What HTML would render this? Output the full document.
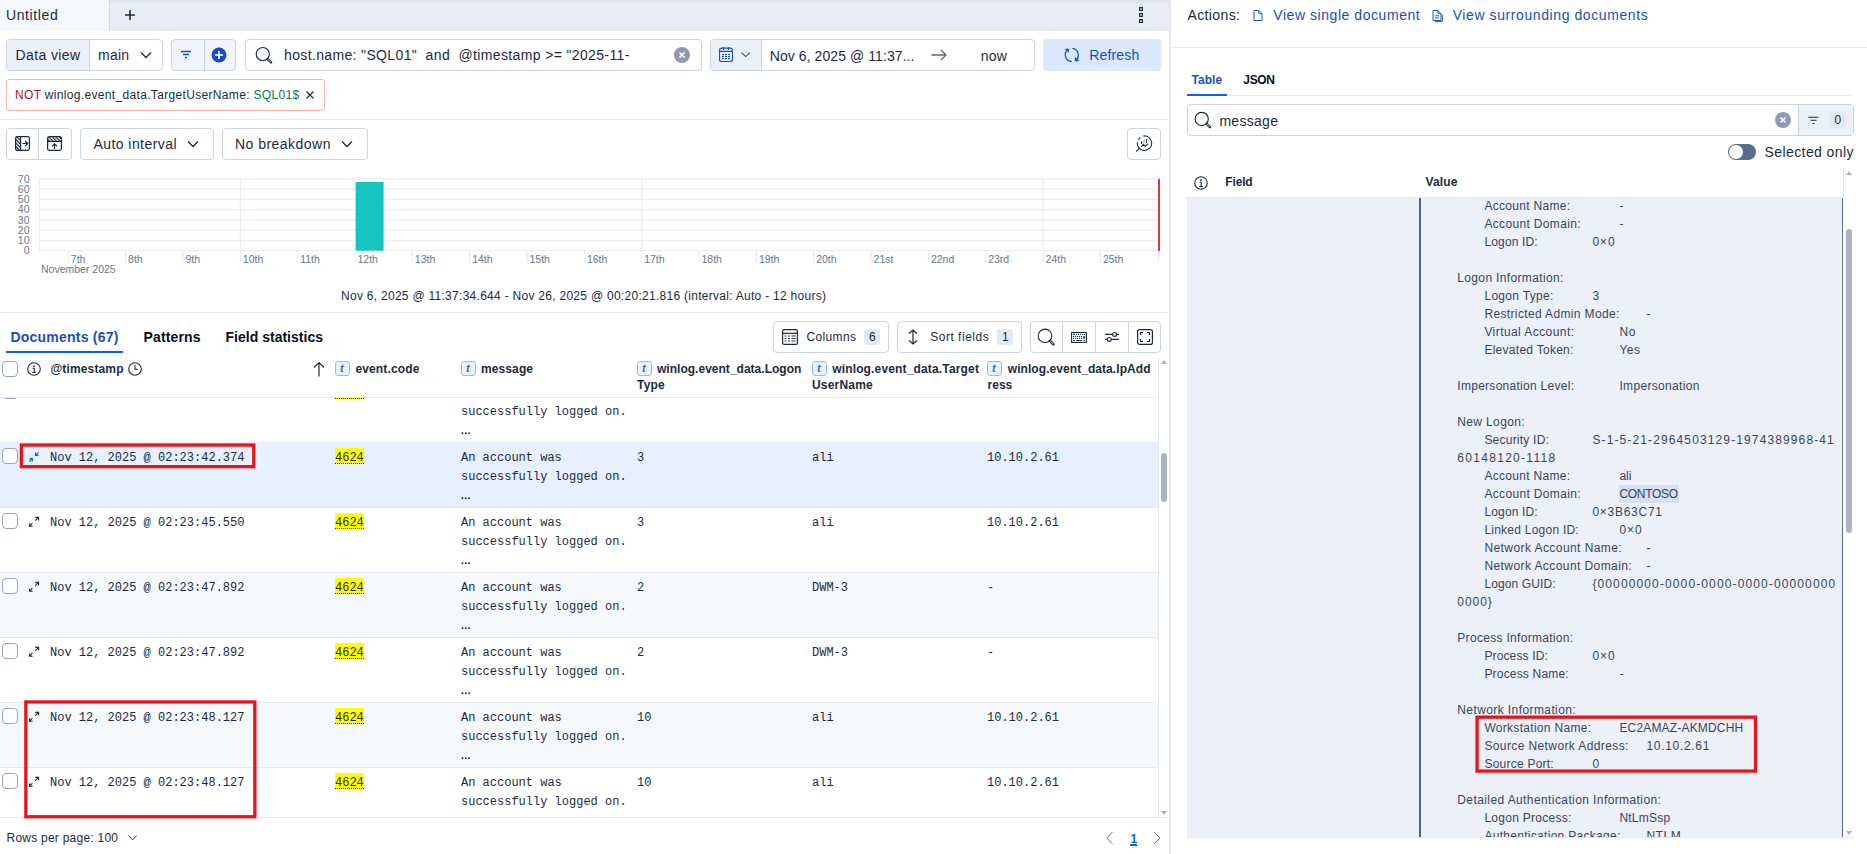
<!DOCTYPE html>
<html><head><meta charset="utf-8">
<style>
*{box-sizing:border-box;margin:0;padding:0}
html,body{width:1867px;height:854px;overflow:hidden;background:#fff}
body{font-family:"Liberation Sans",sans-serif;color:#1d2a3e;font-size:14px;position:relative}
.a{position:absolute}
.t{position:absolute;white-space:nowrap;line-height:1}
.box{position:absolute;border:1px solid #cad3e2;border-radius:4px;background:#fff}
svg{position:absolute;overflow:visible}
</style></head><body>
<div class="a" style="left:0px;top:0px;width:1169px;height:31px;background:#e8ecf3;"></div>
<div class="a" style="left:0px;top:0px;width:1169px;height:4px;background:linear-gradient(#dce1e9,#e8ecf3);"></div>
<div class="a" style="left:0px;top:0px;width:110px;height:31px;background:#f5f8fb;border-right:1px solid #d3dae6"></div>
<div class="t" style="left:6px;top:8.00px;font-size:14px;letter-spacing:0.604px;">Untitled</div>
<svg style="left:124px;top:9px" width="12" height="12" viewBox="0 0 12 12"><path d="M6 1v10M1 6h10" stroke="#1d2a3e" stroke-width="1.6"/></svg>
<svg style="left:1137px;top:7px" width="8" height="16" viewBox="0 0 8 16"><rect x="2.6" y="0.6" width="2.8" height="2.8" fill="none" stroke="#1d2a3e" stroke-width="1.2"/><rect x="2.6" y="6.6" width="2.8" height="2.8" fill="none" stroke="#1d2a3e" stroke-width="1.2"/><rect x="2.6" y="12.6" width="2.8" height="2.8" fill="none" stroke="#1d2a3e" stroke-width="1.2"/></svg>
<div class="a" style="left:1169px;top:0px;width:2px;height:854px;background:#e3e8f2;"></div>
<div class="box" style="left:6px;top:39px;width:157px;height:32px;overflow:hidden"><div class="a" style="left:0;top:0;width:83px;height:30px;background:#ecf0f8;border-right:1px solid #cad3e2"></div></div>
<div class="t" style="left:15.5px;top:48.00px;font-size:14px;letter-spacing:0.391px;">Data view</div>
<div class="t" style="left:98px;top:48.00px;font-size:14px;letter-spacing:0.214px;">main</div>
<svg style="left:140px;top:51px" width="12" height="8" viewBox="0 0 12 8"><path d="M1 1.5l5 5 5-5" fill="none" stroke="#1d2a3e" stroke-width="1.3"/></svg>
<div class="box" style="left:171px;top:39px;width:65px;height:32px;background:#f1f4fa;overflow:hidden"><div class="a" style="left:32px;top:0;width:1px;height:30px;background:#cad3e2"></div></div>
<svg style="left:180px;top:50px" width="12" height="10" viewBox="0 0 12 10"><path d="M1 1.5h10M3 4.5h6M5 7.5h2" stroke="#1750ba" stroke-width="1.3"/></svg>
<svg style="left:211px;top:47px" width="16" height="16" viewBox="0 0 16 16"><circle cx="8" cy="8" r="7.5" fill="#1750ba"/><path d="M8 4v8M4 8h8" stroke="#fff" stroke-width="1.6"/></svg>
<div class="box" style="left:245px;top:39px;width:457px;height:32px;"></div>
<svg style="left:255px;top:46px" width="20" height="20" viewBox="0 0 20 20"><circle cx="7.8" cy="8.1" r="6.6" fill="none" stroke="#1d2a3e" stroke-width="1.15"/><path d="M12.77 13.07L16.07 16.37" stroke="#1d2a3e" stroke-width="2.6" stroke-linecap="round"/><path d="M13.17 13.47L15.77 16.07" stroke="#fff" stroke-width="0.7" stroke-linecap="round"/></svg>
<div class="t" style="left:284px;top:48.40px;font-size:14px;letter-spacing:0.358px;">host.name: "SQL01"  and  @timestamp &gt;= "2025-11-</div>
<svg style="left:674px;top:47px" width="16" height="16" viewBox="0 0 16 16"><circle cx="8" cy="8" r="8" fill="#8e9ab1"/><path d="M5.5 5.5l5 5M10.5 5.5l-5 5" stroke="#fff" stroke-width="1.7"/></svg>
<div class="box" style="left:710px;top:39px;width:325px;height:32px;overflow:hidden"><div class="a" style="left:0;top:0;width:51px;height:30px;background:#ecf0f8;border-right:1px solid #cad3e2"></div></div>
<svg style="left:719px;top:47px" width="14" height="15" viewBox="0 0 14 15"><rect x="0.55" y="1.1" width="12.9" height="13.4" rx="2" fill="none" stroke="#1750ba" stroke-width="1.1"/><path d="M0.55 4.4h12.9M4.5 0v3M9.5 0v3" stroke="#1750ba" stroke-width="1.1"/><rect x="3" y="6.95" width="2" height="1.1" fill="#1750ba"/><rect x="3" y="8.95" width="2" height="1.1" fill="#1750ba"/><rect x="3" y="10.95" width="2" height="1.1" fill="#1750ba"/><rect x="6" y="6.95" width="2" height="1.1" fill="#1750ba"/><rect x="6" y="8.95" width="2" height="1.1" fill="#1750ba"/><rect x="6" y="10.95" width="2" height="1.1" fill="#1750ba"/><rect x="9" y="6.95" width="2" height="1.1" fill="#1750ba"/><rect x="9" y="8.95" width="2" height="1.1" fill="#1750ba"/><rect x="9" y="10.95" width="2" height="1.1" fill="#1750ba"/></svg>
<svg style="left:741px;top:52px" width="10" height="6" viewBox="0 0 10 6"><path d="M0.5 0.6L4.7 4.6 8.9 0.6" fill="none" stroke="#1750ba" stroke-width="1.1"/></svg>
<div class="t" style="left:769.7px;top:48.60px;font-size:14px;letter-spacing:0.078px;">Nov 6, 2025 @ 11:37...</div>
<svg style="left:931px;top:49px" width="16" height="12" viewBox="0 0 16 12"><path d="M0.5 6h14.5M10 1l5 5-5 5" fill="none" stroke="#5a6880" stroke-width="1.3"/></svg>
<div class="t" style="left:980.8px;top:48.60px;font-size:14px;letter-spacing:0.156px;">now</div>
<div class="a" style="left:1043px;top:39px;width:118px;height:32px;background:#d9e8ff;border-radius:4px"></div>
<svg style="left:1064px;top:47px" width="16" height="16" viewBox="0 0 16 16"><path d="M7.7 14.6A6.7 6.7 0 0 1 4.3 2.3M1.2 2.3H4.3V5.6M8.4 1.4A6.7 6.7 0 0 1 11.5 13.5M11.5 10.2V13.5H14.8" fill="none" stroke="#1750ba" stroke-width="1.3"/></svg>
<div class="t" style="left:1089.2px;top:48.00px;font-size:14px;color:#1750ba;letter-spacing:0.161px;">Refresh</div>
<div class="a" style="left:6px;top:79px;width:319px;height:32px;border:1px solid #f6b3ad;border-radius:3px"></div>
<div class="t" style="left:15px;top:89.00px;font-size:12px;letter-spacing:0.332px;"><span style="color:#a71627">NOT</span> winlog.event_data.TargetUserName: <span style="color:#00785a">SQL01$</span></div>
<svg style="left:306px;top:91px" width="8" height="8" viewBox="0 0 8 8"><path d="M0.5 0.5l7 7M7.5 0.5l-7 7" stroke="#1d2a3e" stroke-width="1.2"/></svg>
<div class="a" style="left:0px;top:119px;width:1169px;height:1px;background:#e3e8f2;"></div>
<div class="box" style="left:6px;top:128px;width:66px;height:32px"><div class="a" style="left:31px;top:0;width:1px;height:30px;background:#cad3e2"></div></div>
<svg style="left:15px;top:136px" width="15" height="15" viewBox="0 0 15 15"><defs><pattern id="hp" width="2.5" height="2.5" patternUnits="userSpaceOnUse" patternTransform="rotate(-45)"><rect width="1.2" height="2.5" fill="#1d2a3e"/></pattern></defs><rect x="0.6" y="0.6" width="13.8" height="13.8" rx="1.8" fill="none" stroke="#1d2a3e" stroke-width="1.2"/><rect x="0.6" y="0.6" width="5" height="13.8" fill="url(#hp)"/><path d="M5.6 0.6v13.8" stroke="#1d2a3e" stroke-width="1.2"/><path d="M7.5 7.5h5M10.2 5l2.5 2.5-2.5 2.5" fill="none" stroke="#1d2a3e" stroke-width="1.2"/></svg>
<svg style="left:47px;top:136px" width="15" height="15" viewBox="0 0 15 15"><rect x="0.6" y="0.6" width="13.8" height="13.8" rx="1.8" fill="none" stroke="#1d2a3e" stroke-width="1.2"/><rect x="0.6" y="0.6" width="13.8" height="4.8" fill="url(#hp)"/><path d="M0.6 5.4h13.8" stroke="#1d2a3e" stroke-width="1.2"/><path d="M7.5 13V7.8M5 10.3l2.5-2.5 2.5 2.5" fill="none" stroke="#1d2a3e" stroke-width="1.2"/></svg>
<div class="box" style="left:80px;top:128px;width:134px;height:32px;"></div>
<div class="t" style="left:93.5px;top:137.00px;font-size:14px;letter-spacing:0.431px;">Auto interval</div>
<svg style="left:187px;top:140px" width="12" height="8" viewBox="0 0 12 8"><path d="M1 1.5l5 5 5-5" fill="none" stroke="#1d2a3e" stroke-width="1.3"/></svg>
<div class="box" style="left:222px;top:128px;width:146px;height:32px;"></div>
<div class="t" style="left:235px;top:137.00px;font-size:14px;letter-spacing:0.474px;">No breakdown</div>
<svg style="left:341px;top:140px" width="12" height="8" viewBox="0 0 12 8"><path d="M1 1.5l5 5 5-5" fill="none" stroke="#1d2a3e" stroke-width="1.3"/></svg>
<div class="box" style="left:1127px;top:128px;width:34px;height:32px;"></div>
<svg style="left:1132px;top:132px" width="24" height="24" viewBox="0 0 24 24"><path d="M11.2 3.95A7.3 7.3 0 1 1 5.2 10.3M6.3 7.7L8.3 5.3M7.5 16.3L4.3 19.5M9.6 9.3v2.6M14.5 7v3.7M9.2 14.6L11.5 12.4 13.4 14.4 16.2 11.6" fill="none" stroke="#1d2a3e" stroke-width="1.1"/><path d="M12 8.2v2.5" stroke="#1d2a3e" stroke-width="1" opacity="0.5"/></svg>
<svg style="left:0;top:170px" width="1169" height="110" viewBox="0 170 1169 110">
<path d="M39 179.0H1159" stroke="#eaeef5" stroke-width="1.3"/>
<text x="29.5" y="182.7" text-anchor="end" font-size="10.5" fill="#69778e" font-family="Liberation Sans">70</text>
<path d="M39 189.2H1159" stroke="#eaeef5" stroke-width="1.3"/>
<text x="29.5" y="192.9" text-anchor="end" font-size="10.5" fill="#69778e" font-family="Liberation Sans">60</text>
<path d="M39 199.5H1159" stroke="#eaeef5" stroke-width="1.3"/>
<text x="29.5" y="203.2" text-anchor="end" font-size="10.5" fill="#69778e" font-family="Liberation Sans">50</text>
<path d="M39 209.7H1159" stroke="#eaeef5" stroke-width="1.3"/>
<text x="29.5" y="213.4" text-anchor="end" font-size="10.5" fill="#69778e" font-family="Liberation Sans">40</text>
<path d="M39 220.0H1159" stroke="#eaeef5" stroke-width="1.3"/>
<text x="29.5" y="223.7" text-anchor="end" font-size="10.5" fill="#69778e" font-family="Liberation Sans">30</text>
<path d="M39 230.2H1159" stroke="#eaeef5" stroke-width="1.3"/>
<text x="29.5" y="233.9" text-anchor="end" font-size="10.5" fill="#69778e" font-family="Liberation Sans">20</text>
<path d="M39 240.5H1159" stroke="#eaeef5" stroke-width="1.3"/>
<text x="29.5" y="244.2" text-anchor="end" font-size="10.5" fill="#69778e" font-family="Liberation Sans">10</text>
<path d="M39 250.7H1159" stroke="#eaeef5" stroke-width="1.3"/>
<text x="29.5" y="254.4" text-anchor="end" font-size="10.5" fill="#69778e" font-family="Liberation Sans">0</text>
<path d="M39.5 179V250.7" stroke="#eaeef5" stroke-width="1"/>
<path d="M240.3 179V250.7" stroke="#e3e8f2" stroke-width="1"/>
<path d="M641.7 179V250.7" stroke="#e3e8f2" stroke-width="1"/>
<path d="M1043.1 179V250.7" stroke="#e3e8f2" stroke-width="1"/>
<path d="M68.3 250.7V262.5" stroke="#e3e8f2" stroke-width="1"/>
<text x="70.8" y="262.5" font-size="10.5" fill="#69778e" font-family="Liberation Sans">7th</text>
<path d="M125.6 250.7V262.5" stroke="#e3e8f2" stroke-width="1"/>
<text x="128.1" y="262.5" font-size="10.5" fill="#69778e" font-family="Liberation Sans">8th</text>
<path d="M183.0 250.7V262.5" stroke="#e3e8f2" stroke-width="1"/>
<text x="185.5" y="262.5" font-size="10.5" fill="#69778e" font-family="Liberation Sans">9th</text>
<path d="M240.3 250.7V262.5" stroke="#e3e8f2" stroke-width="1"/>
<text x="242.8" y="262.5" font-size="10.5" fill="#69778e" font-family="Liberation Sans">10th</text>
<path d="M297.7 250.7V262.5" stroke="#e3e8f2" stroke-width="1"/>
<text x="300.2" y="262.5" font-size="10.5" fill="#69778e" font-family="Liberation Sans">11th</text>
<path d="M355.0 250.7V262.5" stroke="#e3e8f2" stroke-width="1"/>
<text x="357.5" y="262.5" font-size="10.5" fill="#69778e" font-family="Liberation Sans">12th</text>
<path d="M412.3 250.7V262.5" stroke="#e3e8f2" stroke-width="1"/>
<text x="414.8" y="262.5" font-size="10.5" fill="#69778e" font-family="Liberation Sans">13th</text>
<path d="M469.7 250.7V262.5" stroke="#e3e8f2" stroke-width="1"/>
<text x="472.2" y="262.5" font-size="10.5" fill="#69778e" font-family="Liberation Sans">14th</text>
<path d="M527.0 250.7V262.5" stroke="#e3e8f2" stroke-width="1"/>
<text x="529.5" y="262.5" font-size="10.5" fill="#69778e" font-family="Liberation Sans">15th</text>
<path d="M584.4 250.7V262.5" stroke="#e3e8f2" stroke-width="1"/>
<text x="586.9" y="262.5" font-size="10.5" fill="#69778e" font-family="Liberation Sans">16th</text>
<path d="M641.7 250.7V262.5" stroke="#e3e8f2" stroke-width="1"/>
<text x="644.2" y="262.5" font-size="10.5" fill="#69778e" font-family="Liberation Sans">17th</text>
<path d="M699.0 250.7V262.5" stroke="#e3e8f2" stroke-width="1"/>
<text x="701.5" y="262.5" font-size="10.5" fill="#69778e" font-family="Liberation Sans">18th</text>
<path d="M756.4 250.7V262.5" stroke="#e3e8f2" stroke-width="1"/>
<text x="758.9" y="262.5" font-size="10.5" fill="#69778e" font-family="Liberation Sans">19th</text>
<path d="M813.7 250.7V262.5" stroke="#e3e8f2" stroke-width="1"/>
<text x="816.2" y="262.5" font-size="10.5" fill="#69778e" font-family="Liberation Sans">20th</text>
<path d="M871.1 250.7V262.5" stroke="#e3e8f2" stroke-width="1"/>
<text x="873.6" y="262.5" font-size="10.5" fill="#69778e" font-family="Liberation Sans">21st</text>
<path d="M928.4 250.7V262.5" stroke="#e3e8f2" stroke-width="1"/>
<text x="930.9" y="262.5" font-size="10.5" fill="#69778e" font-family="Liberation Sans">22nd</text>
<path d="M985.7 250.7V262.5" stroke="#e3e8f2" stroke-width="1"/>
<text x="988.2" y="262.5" font-size="10.5" fill="#69778e" font-family="Liberation Sans">23rd</text>
<path d="M1043.1 250.7V262.5" stroke="#e3e8f2" stroke-width="1"/>
<text x="1045.6" y="262.5" font-size="10.5" fill="#69778e" font-family="Liberation Sans">24th</text>
<path d="M1100.4 250.7V262.5" stroke="#e3e8f2" stroke-width="1"/>
<text x="1102.9" y="262.5" font-size="10.5" fill="#69778e" font-family="Liberation Sans">25th</text>
<path d="M1158.5 250.7V262.5" stroke="#e3e8f2" stroke-width="1"/>
<text x="41" y="272.8" font-size="10.5" fill="#69778e" font-family="Liberation Sans">November 2025</text>
<rect x="355.6" y="182" width="28" height="68.7" fill="#16c5c0"/>
<rect x="1158" y="179" width="2" height="72.0" fill="#da3737"/>
</svg>
<div class="t" style="left:341px;top:290.00px;font-size:12px;letter-spacing:0.280px;">Nov 6, 2025 @ 11:37:34.644 - Nov 26, 2025 @ 00:20:21.816 (interval: Auto - 12 hours)</div>
<div class="a" style="left:0px;top:312px;width:1169px;height:1px;background:#e3e8f2;"></div>
<div class="t" style="left:10.4px;top:329.60px;font-size:14px;font-weight:bold;color:#1750ba;letter-spacing:0.228px;">Documents (67)</div>
<div class="t" style="left:143.6px;top:329.60px;font-size:14px;font-weight:bold;color:#07101f;letter-spacing:0.138px;">Patterns</div>
<div class="t" style="left:225.5px;top:329.60px;font-size:14px;font-weight:bold;color:#07101f;letter-spacing:0.016px;">Field statistics</div>
<div class="a" style="left:6px;top:351px;width:117px;height:2px;background:#0b64dd;"></div>
<div class="box" style="left:773px;top:321px;width:116px;height:32px;"></div>
<svg style="left:782px;top:329px" width="16" height="16" viewBox="0 0 16 16"><rect x="0.6" y="0.6" width="14.8" height="14.8" rx="1.5" fill="none" stroke="#1d2a3e" stroke-width="1.2"/><path d="M0.6 4.3h14.8" stroke="#1d2a3e" stroke-width="1.2"/><path d="M2.5 7h2M6 7h2M9.5 7h4M2.5 9.5h2M6 9.5h2M9.5 9.5h4M2.5 12h2M6 12h2M9.5 12h4" stroke="#1d2a3e" stroke-width="1"/></svg>
<div class="t" style="left:806.5px;top:331.00px;font-size:12px;letter-spacing:0.357px;">Columns</div>
<div class="a" style="left:864px;top:329px;width:16px;height:16px;background:#e3e8f2;border-radius:3px"></div>
<div class="t" style="left:869px;top:331.00px;font-size:12px;letter-spacing:0.000px;">6</div>
<div class="box" style="left:897px;top:321px;width:125px;height:32px;"></div>
<svg style="left:906px;top:329px" width="14" height="16" viewBox="0 0 14 16"><path d="M7 1v14M3 4.5L7 1l4 3.5M3 11.5L7 15l4-3.5" fill="none" stroke="#1d2a3e" stroke-width="1.2"/></svg>
<div class="t" style="left:930.2px;top:331.00px;font-size:12px;letter-spacing:0.514px;">Sort fields</div>
<div class="a" style="left:997px;top:329px;width:16px;height:16px;background:#e3e8f2;border-radius:3px"></div>
<div class="t" style="left:1002px;top:331.00px;font-size:12px;letter-spacing:0.000px;">1</div>
<div class="box" style="left:1030px;top:321px;width:131px;height:32px"><div class="a" style="left:31px;top:0;width:1px;height:30px;background:#cad3e2"></div><div class="a" style="left:64px;top:0;width:1px;height:30px;background:#cad3e2"></div><div class="a" style="left:97px;top:0;width:1px;height:30px;background:#cad3e2"></div></div>
<svg style="left:1037px;top:328px" width="20" height="20" viewBox="0 0 20 20"><circle cx="8" cy="7.9" r="6.8" fill="none" stroke="#1d2a3e" stroke-width="1.15"/><path d="M13.11 13.01L16.41 16.31" stroke="#1d2a3e" stroke-width="2.6" stroke-linecap="round"/><path d="M13.51 13.41L16.11 16.01" stroke="#fff" stroke-width="0.7" stroke-linecap="round"/></svg>
<svg style="left:1071px;top:332px" width="16" height="11" viewBox="0 0 16 11"><rect x="0.6" y="0.5" width="14.8" height="9.9" fill="none" stroke="#1d2a3e" stroke-width="1.1"/><rect x="4.95" y="1.8499999999999999" width="1.1" height="1.1" fill="#1d2a3e"/><rect x="6.95" y="1.8499999999999999" width="1.1" height="1.1" fill="#1d2a3e"/><rect x="8.95" y="1.8499999999999999" width="1.1" height="1.1" fill="#1d2a3e"/><rect x="10.95" y="1.8499999999999999" width="1.1" height="1.1" fill="#1d2a3e"/><rect x="12.95" y="1.8499999999999999" width="1.1" height="1.1" fill="#1d2a3e"/><rect x="1.95" y="3.95" width="1.1" height="1.1" fill="#1d2a3e"/><rect x="3.95" y="3.95" width="1.1" height="1.1" fill="#1d2a3e"/><rect x="5.95" y="3.95" width="1.1" height="1.1" fill="#1d2a3e"/><rect x="7.95" y="3.95" width="1.1" height="1.1" fill="#1d2a3e"/><rect x="9.95" y="3.95" width="1.1" height="1.1" fill="#1d2a3e"/><rect x="1.95" y="5.8500000000000005" width="1.1" height="1.1" fill="#1d2a3e"/><rect x="3.95" y="5.8500000000000005" width="1.1" height="1.1" fill="#1d2a3e"/><rect x="5.95" y="5.8500000000000005" width="1.1" height="1.1" fill="#1d2a3e"/><rect x="7.95" y="5.8500000000000005" width="1.1" height="1.1" fill="#1d2a3e"/><rect x="9.95" y="5.8500000000000005" width="1.1" height="1.1" fill="#1d2a3e"/><path d="M2.1 2.4h1.8M2.1 8.5h1.8M5.3 8.5h5.4M12.3 8.5h1.5" stroke="#1d2a3e" stroke-width="1.1"/><rect x="12.3" y="4" width="1.5" height="2.8" fill="#1d2a3e"/></svg>
<svg style="left:1104px;top:331px" width="16" height="12" viewBox="0 0 16 12"><path d="M1 3.4h14M1 8.4h14" stroke="#1d2a3e" stroke-width="1.2"/><circle cx="10.6" cy="3.4" r="1.9" fill="#fff" stroke="#1d2a3e" stroke-width="1.2"/><circle cx="5.3" cy="8.4" r="1.9" fill="#fff" stroke="#1d2a3e" stroke-width="1.2"/></svg>
<svg style="left:1137px;top:329px" width="16" height="16" viewBox="0 0 16 16"><rect x="0.6" y="0.6" width="14.8" height="14.8" rx="2" fill="none" stroke="#1d2a3e" stroke-width="1.2"/><path d="M3.5 6V3.5H6M10 3.5h2.5V6M12.5 10v2.5H10M6 12.5H3.5V10" fill="none" stroke="#1d2a3e" stroke-width="1.2"/></svg>
<div class="a" style="left:2px;top:361px;width:16px;height:16px;background:#fff;border:1px solid #98a6bd;border-radius:4px"></div>
<svg style="left:27px;top:362px" width="14" height="14" viewBox="0 0 14 14"><circle cx="7" cy="7" r="6.3" fill="none" stroke="#1d2a3e" stroke-width="1.1"/><circle cx="7" cy="4.2" r="0.9" fill="#1d2a3e"/><path d="M5.5 6.3h1.7v4.2M5.3 10.5h3.5" fill="none" stroke="#1d2a3e" stroke-width="1.1"/></svg>
<div class="t" style="left:50.5px;top:362.70px;font-size:12px;font-weight:bold;letter-spacing:0.142px;">@timestamp</div>
<svg style="left:128px;top:362px" width="14" height="14" viewBox="0 0 14 14"><circle cx="7" cy="7" r="6.3" fill="none" stroke="#1d2a3e" stroke-width="1.1"/><path d="M7 3.3V7.3h3" fill="none" stroke="#1d2a3e" stroke-width="1.1"/></svg>
<svg style="left:313px;top:361px" width="12" height="16" viewBox="0 0 12 16"><path d="M6 1.5v14M1 6.5l5-5 5 5" fill="none" stroke="#1d2a3e" stroke-width="1.2"/></svg>
<div class="a" style="left:335px;top:361px;width:15px;height:15px;border:1px solid #94bcf4;background:#e8f1fe;border-radius:3px"></div>
<div class="t" style="left:340px;top:362.50px;font-size:11px;font-weight:bold;color:#3a6cc3;letter-spacing:0.000px;font-style:italic;">t</div>
<div class="t" style="left:355.4px;top:362.70px;font-size:12px;font-weight:bold;letter-spacing:0.144px;">event.code</div>
<div class="a" style="left:461px;top:361px;width:15px;height:15px;border:1px solid #94bcf4;background:#e8f1fe;border-radius:3px"></div>
<div class="t" style="left:466px;top:362.50px;font-size:11px;font-weight:bold;color:#3a6cc3;letter-spacing:0.000px;font-style:italic;">t</div>
<div class="t" style="left:481px;top:362.70px;font-size:12px;font-weight:bold;letter-spacing:0.104px;">message</div>
<div class="a" style="left:637px;top:361px;width:15px;height:15px;border:1px solid #94bcf4;background:#e8f1fe;border-radius:3px"></div>
<div class="t" style="left:642px;top:362.50px;font-size:11px;font-weight:bold;color:#3a6cc3;letter-spacing:0.000px;font-style:italic;">t</div>
<div class="t" style="left:657px;top:362.70px;font-size:12px;font-weight:bold;letter-spacing:0.017px;">winlog.event_data.Logon</div>
<div class="t" style="left:637px;top:378.70px;font-size:12px;font-weight:bold;letter-spacing:0.225px;">Type</div>
<div class="a" style="left:812px;top:361px;width:15px;height:15px;border:1px solid #94bcf4;background:#e8f1fe;border-radius:3px"></div>
<div class="t" style="left:817px;top:362.50px;font-size:11px;font-weight:bold;color:#3a6cc3;letter-spacing:0.000px;font-style:italic;">t</div>
<div class="t" style="left:832.2px;top:362.70px;font-size:12px;font-weight:bold;letter-spacing:0.155px;">winlog.event_data.Target</div>
<div class="t" style="left:812px;top:378.70px;font-size:12px;font-weight:bold;letter-spacing:0.189px;">UserName</div>
<div class="a" style="left:987px;top:361px;width:15px;height:15px;border:1px solid #94bcf4;background:#e8f1fe;border-radius:3px"></div>
<div class="t" style="left:992px;top:362.50px;font-size:11px;font-weight:bold;color:#3a6cc3;letter-spacing:0.000px;font-style:italic;">t</div>
<div class="t" style="left:1007.8px;top:362.70px;font-size:12px;font-weight:bold;letter-spacing:0.061px;">winlog.event_data.IpAdd</div>
<div class="t" style="left:987.5px;top:378.70px;font-size:12px;font-weight:bold;letter-spacing:0.032px;">ress</div>
<div class="a" style="left:0;top:397px;width:1158px;height:420px;overflow:hidden">
<div class="a" style="left:0;top:-19px;width:1158px;height:65px;background:#fff;border-bottom:1px solid #e3e8f2">
<div class="a" style="left:2px;top:5px;width:16px;height:16px;background:#fff;border:1px solid #98a6bd;border-radius:4px"></div>
<svg style="left:28px;top:6px" width="12" height="12" viewBox="0 0 12 12"><path d="M7.2 6.7L10.6 3.4M7.3 3.4H10.6V6.5M4.4 9.2L1.5 12.3M1.5 9.5V12.3H4.6" fill="none" stroke="#1d2a3e" stroke-width="1.1"/></svg>
<div class="t" style="left:50px;top:8.80px;font-size:12px;font-family:'Liberation Mono',monospace;letter-spacing:0.000px;">Nov 12, 2025 @ 02:23:40.000</div>
<div class="a" style="left:335px;top:5px;width:29px;height:16px;background:#ffff00;border-bottom:1px dotted #1d2a3e"></div>
<div class="t" style="left:335px;top:8.80px;font-size:12px;font-family:'Liberation Mono',monospace;letter-spacing:0.000px;">4624</div>
<div class="t" style="left:461px;top:8.80px;font-size:12px;font-family:'Liberation Mono',monospace;letter-spacing:0.000px;">An account was</div>
<div class="t" style="left:461px;top:27.80px;font-size:12px;font-family:'Liberation Mono',monospace;letter-spacing:0.000px;">successfully logged on.</div>
<svg style="left:460px;top:53px" width="12" height="4" viewBox="0 0 12 4"><circle cx="2.5" cy="2.3" r="0.95" fill="#1d2a3e"/><circle cx="5.8" cy="2.3" r="0.95" fill="#1d2a3e"/><circle cx="9.1" cy="2.3" r="0.95" fill="#1d2a3e"/></svg>
</div>
<div class="a" style="left:0;top:46px;width:1158px;height:65px;background:#e6f0fe;border-bottom:1px solid #e3e8f2">
<div class="a" style="left:2px;top:5px;width:16px;height:16px;background:#fff;border:1px solid #98a6bd;border-radius:4px"></div>
<svg style="left:28px;top:6px" width="12" height="12" viewBox="0 0 12 12"><path d="M10.6 3.4L7.5 6.4M7.5 3.6V6.4H10.5M1.3 12.6L4.4 9.6M1.5 9.6H4.4V12.5" fill="none" stroke="#0b64dd" stroke-width="1.1"/></svg>
<div class="t" style="left:50px;top:8.80px;font-size:12px;font-family:'Liberation Mono',monospace;letter-spacing:0.000px;">Nov 12, 2025 @ 02:23:42.374</div>
<div class="a" style="left:335px;top:5px;width:29px;height:16px;background:#ffff00;border-bottom:1px dotted #1d2a3e"></div>
<div class="t" style="left:335px;top:8.80px;font-size:12px;font-family:'Liberation Mono',monospace;letter-spacing:0.000px;">4624</div>
<div class="t" style="left:461px;top:8.80px;font-size:12px;font-family:'Liberation Mono',monospace;letter-spacing:0.000px;">An account was</div>
<div class="t" style="left:461px;top:27.80px;font-size:12px;font-family:'Liberation Mono',monospace;letter-spacing:0.000px;">successfully logged on.</div>
<svg style="left:460px;top:53px" width="12" height="4" viewBox="0 0 12 4"><circle cx="2.5" cy="2.3" r="0.95" fill="#1d2a3e"/><circle cx="5.8" cy="2.3" r="0.95" fill="#1d2a3e"/><circle cx="9.1" cy="2.3" r="0.95" fill="#1d2a3e"/></svg>
<div class="t" style="left:637px;top:8.80px;font-size:12px;font-family:'Liberation Mono',monospace;letter-spacing:0.000px;">3</div>
<div class="t" style="left:812px;top:8.80px;font-size:12px;font-family:'Liberation Mono',monospace;letter-spacing:0.000px;">ali</div>
<div class="t" style="left:987px;top:8.80px;font-size:12px;font-family:'Liberation Mono',monospace;letter-spacing:0.000px;">10.10.2.61</div>
</div>
<div class="a" style="left:0;top:111px;width:1158px;height:65px;background:#fff;border-bottom:1px solid #e3e8f2">
<div class="a" style="left:2px;top:5px;width:16px;height:16px;background:#fff;border:1px solid #98a6bd;border-radius:4px"></div>
<svg style="left:28px;top:6px" width="12" height="12" viewBox="0 0 12 12"><path d="M7.2 6.7L10.6 3.4M7.3 3.4H10.6V6.5M4.4 9.2L1.5 12.3M1.5 9.5V12.3H4.6" fill="none" stroke="#1d2a3e" stroke-width="1.1"/></svg>
<div class="t" style="left:50px;top:8.80px;font-size:12px;font-family:'Liberation Mono',monospace;letter-spacing:0.000px;">Nov 12, 2025 @ 02:23:45.550</div>
<div class="a" style="left:335px;top:5px;width:29px;height:16px;background:#ffff00;border-bottom:1px dotted #1d2a3e"></div>
<div class="t" style="left:335px;top:8.80px;font-size:12px;font-family:'Liberation Mono',monospace;letter-spacing:0.000px;">4624</div>
<div class="t" style="left:461px;top:8.80px;font-size:12px;font-family:'Liberation Mono',monospace;letter-spacing:0.000px;">An account was</div>
<div class="t" style="left:461px;top:27.80px;font-size:12px;font-family:'Liberation Mono',monospace;letter-spacing:0.000px;">successfully logged on.</div>
<svg style="left:460px;top:53px" width="12" height="4" viewBox="0 0 12 4"><circle cx="2.5" cy="2.3" r="0.95" fill="#1d2a3e"/><circle cx="5.8" cy="2.3" r="0.95" fill="#1d2a3e"/><circle cx="9.1" cy="2.3" r="0.95" fill="#1d2a3e"/></svg>
<div class="t" style="left:637px;top:8.80px;font-size:12px;font-family:'Liberation Mono',monospace;letter-spacing:0.000px;">3</div>
<div class="t" style="left:812px;top:8.80px;font-size:12px;font-family:'Liberation Mono',monospace;letter-spacing:0.000px;">ali</div>
<div class="t" style="left:987px;top:8.80px;font-size:12px;font-family:'Liberation Mono',monospace;letter-spacing:0.000px;">10.10.2.61</div>
</div>
<div class="a" style="left:0;top:176px;width:1158px;height:65px;background:#f6f9fc;border-bottom:1px solid #e3e8f2">
<div class="a" style="left:2px;top:5px;width:16px;height:16px;background:#fff;border:1px solid #98a6bd;border-radius:4px"></div>
<svg style="left:28px;top:6px" width="12" height="12" viewBox="0 0 12 12"><path d="M7.2 6.7L10.6 3.4M7.3 3.4H10.6V6.5M4.4 9.2L1.5 12.3M1.5 9.5V12.3H4.6" fill="none" stroke="#1d2a3e" stroke-width="1.1"/></svg>
<div class="t" style="left:50px;top:8.80px;font-size:12px;font-family:'Liberation Mono',monospace;letter-spacing:0.000px;">Nov 12, 2025 @ 02:23:47.892</div>
<div class="a" style="left:335px;top:5px;width:29px;height:16px;background:#ffff00;border-bottom:1px dotted #1d2a3e"></div>
<div class="t" style="left:335px;top:8.80px;font-size:12px;font-family:'Liberation Mono',monospace;letter-spacing:0.000px;">4624</div>
<div class="t" style="left:461px;top:8.80px;font-size:12px;font-family:'Liberation Mono',monospace;letter-spacing:0.000px;">An account was</div>
<div class="t" style="left:461px;top:27.80px;font-size:12px;font-family:'Liberation Mono',monospace;letter-spacing:0.000px;">successfully logged on.</div>
<svg style="left:460px;top:53px" width="12" height="4" viewBox="0 0 12 4"><circle cx="2.5" cy="2.3" r="0.95" fill="#1d2a3e"/><circle cx="5.8" cy="2.3" r="0.95" fill="#1d2a3e"/><circle cx="9.1" cy="2.3" r="0.95" fill="#1d2a3e"/></svg>
<div class="t" style="left:637px;top:8.80px;font-size:12px;font-family:'Liberation Mono',monospace;letter-spacing:0.000px;">2</div>
<div class="t" style="left:812px;top:8.80px;font-size:12px;font-family:'Liberation Mono',monospace;letter-spacing:0.000px;">DWM-3</div>
<div class="t" style="left:987px;top:8.80px;font-size:12px;font-family:'Liberation Mono',monospace;letter-spacing:0.000px;">-</div>
</div>
<div class="a" style="left:0;top:241px;width:1158px;height:65px;background:#fff;border-bottom:1px solid #e3e8f2">
<div class="a" style="left:2px;top:5px;width:16px;height:16px;background:#fff;border:1px solid #98a6bd;border-radius:4px"></div>
<svg style="left:28px;top:6px" width="12" height="12" viewBox="0 0 12 12"><path d="M7.2 6.7L10.6 3.4M7.3 3.4H10.6V6.5M4.4 9.2L1.5 12.3M1.5 9.5V12.3H4.6" fill="none" stroke="#1d2a3e" stroke-width="1.1"/></svg>
<div class="t" style="left:50px;top:8.80px;font-size:12px;font-family:'Liberation Mono',monospace;letter-spacing:0.000px;">Nov 12, 2025 @ 02:23:47.892</div>
<div class="a" style="left:335px;top:5px;width:29px;height:16px;background:#ffff00;border-bottom:1px dotted #1d2a3e"></div>
<div class="t" style="left:335px;top:8.80px;font-size:12px;font-family:'Liberation Mono',monospace;letter-spacing:0.000px;">4624</div>
<div class="t" style="left:461px;top:8.80px;font-size:12px;font-family:'Liberation Mono',monospace;letter-spacing:0.000px;">An account was</div>
<div class="t" style="left:461px;top:27.80px;font-size:12px;font-family:'Liberation Mono',monospace;letter-spacing:0.000px;">successfully logged on.</div>
<svg style="left:460px;top:53px" width="12" height="4" viewBox="0 0 12 4"><circle cx="2.5" cy="2.3" r="0.95" fill="#1d2a3e"/><circle cx="5.8" cy="2.3" r="0.95" fill="#1d2a3e"/><circle cx="9.1" cy="2.3" r="0.95" fill="#1d2a3e"/></svg>
<div class="t" style="left:637px;top:8.80px;font-size:12px;font-family:'Liberation Mono',monospace;letter-spacing:0.000px;">2</div>
<div class="t" style="left:812px;top:8.80px;font-size:12px;font-family:'Liberation Mono',monospace;letter-spacing:0.000px;">DWM-3</div>
<div class="t" style="left:987px;top:8.80px;font-size:12px;font-family:'Liberation Mono',monospace;letter-spacing:0.000px;">-</div>
</div>
<div class="a" style="left:0;top:306px;width:1158px;height:65px;background:#f6f9fc;border-bottom:1px solid #e3e8f2">
<div class="a" style="left:2px;top:5px;width:16px;height:16px;background:#fff;border:1px solid #98a6bd;border-radius:4px"></div>
<svg style="left:28px;top:6px" width="12" height="12" viewBox="0 0 12 12"><path d="M7.2 6.7L10.6 3.4M7.3 3.4H10.6V6.5M4.4 9.2L1.5 12.3M1.5 9.5V12.3H4.6" fill="none" stroke="#1d2a3e" stroke-width="1.1"/></svg>
<div class="t" style="left:50px;top:8.80px;font-size:12px;font-family:'Liberation Mono',monospace;letter-spacing:0.000px;">Nov 12, 2025 @ 02:23:48.127</div>
<div class="a" style="left:335px;top:5px;width:29px;height:16px;background:#ffff00;border-bottom:1px dotted #1d2a3e"></div>
<div class="t" style="left:335px;top:8.80px;font-size:12px;font-family:'Liberation Mono',monospace;letter-spacing:0.000px;">4624</div>
<div class="t" style="left:461px;top:8.80px;font-size:12px;font-family:'Liberation Mono',monospace;letter-spacing:0.000px;">An account was</div>
<div class="t" style="left:461px;top:27.80px;font-size:12px;font-family:'Liberation Mono',monospace;letter-spacing:0.000px;">successfully logged on.</div>
<svg style="left:460px;top:53px" width="12" height="4" viewBox="0 0 12 4"><circle cx="2.5" cy="2.3" r="0.95" fill="#1d2a3e"/><circle cx="5.8" cy="2.3" r="0.95" fill="#1d2a3e"/><circle cx="9.1" cy="2.3" r="0.95" fill="#1d2a3e"/></svg>
<div class="t" style="left:637px;top:8.80px;font-size:12px;font-family:'Liberation Mono',monospace;letter-spacing:0.000px;">10</div>
<div class="t" style="left:812px;top:8.80px;font-size:12px;font-family:'Liberation Mono',monospace;letter-spacing:0.000px;">ali</div>
<div class="t" style="left:987px;top:8.80px;font-size:12px;font-family:'Liberation Mono',monospace;letter-spacing:0.000px;">10.10.2.61</div>
</div>
<div class="a" style="left:0;top:371px;width:1158px;height:65px;background:#fff;border-bottom:1px solid #e3e8f2">
<div class="a" style="left:2px;top:5px;width:16px;height:16px;background:#fff;border:1px solid #98a6bd;border-radius:4px"></div>
<svg style="left:28px;top:6px" width="12" height="12" viewBox="0 0 12 12"><path d="M7.2 6.7L10.6 3.4M7.3 3.4H10.6V6.5M4.4 9.2L1.5 12.3M1.5 9.5V12.3H4.6" fill="none" stroke="#1d2a3e" stroke-width="1.1"/></svg>
<div class="t" style="left:50px;top:8.80px;font-size:12px;font-family:'Liberation Mono',monospace;letter-spacing:0.000px;">Nov 12, 2025 @ 02:23:48.127</div>
<div class="a" style="left:335px;top:5px;width:29px;height:16px;background:#ffff00;border-bottom:1px dotted #1d2a3e"></div>
<div class="t" style="left:335px;top:8.80px;font-size:12px;font-family:'Liberation Mono',monospace;letter-spacing:0.000px;">4624</div>
<div class="t" style="left:461px;top:8.80px;font-size:12px;font-family:'Liberation Mono',monospace;letter-spacing:0.000px;">An account was</div>
<div class="t" style="left:461px;top:27.80px;font-size:12px;font-family:'Liberation Mono',monospace;letter-spacing:0.000px;">successfully logged on.</div>
<svg style="left:460px;top:53px" width="12" height="4" viewBox="0 0 12 4"><circle cx="2.5" cy="2.3" r="0.95" fill="#1d2a3e"/><circle cx="5.8" cy="2.3" r="0.95" fill="#1d2a3e"/><circle cx="9.1" cy="2.3" r="0.95" fill="#1d2a3e"/></svg>
<div class="t" style="left:637px;top:8.80px;font-size:12px;font-family:'Liberation Mono',monospace;letter-spacing:0.000px;">10</div>
<div class="t" style="left:812px;top:8.80px;font-size:12px;font-family:'Liberation Mono',monospace;letter-spacing:0.000px;">ali</div>
<div class="t" style="left:987px;top:8.80px;font-size:12px;font-family:'Liberation Mono',monospace;letter-spacing:0.000px;">10.10.2.61</div>
</div>
</div>
<div class="a" style="left:0px;top:397px;width:1158px;height:1px;background:#e3e8f2;"></div>
<div class="a" style="left:0px;top:817px;width:1169px;height:1px;background:#e3e8f2;"></div>
<div class="a" style="left:1158px;top:357px;width:1px;height:460px;background:#e3e8f2;"></div>
<svg style="left:1161px;top:360px" width="6" height="4" viewBox="0 0 6 4"><path d="M0 4L3 0 6 4z" fill="#a9b3c4"/></svg>
<svg style="left:1161px;top:811px" width="6" height="4" viewBox="0 0 6 4"><path d="M0 0L3 4 6 0z" fill="#a9b3c4"/></svg>
<div class="a" style="left:1161px;top:453px;width:6px;height:49px;background:#abb4c4;border-radius:3px"></div>
<svg style="left:0px;top:0px" width="1867" height="854" viewBox="0 0 1867 854"><rect x="21.35" y="445.05" width="232.40" height="21.60" fill="none" stroke="#e3161b" stroke-width="3.3"/></svg>
<svg style="left:0px;top:0px" width="1867" height="854" viewBox="0 0 1867 854"><rect x="25.85" y="701.95" width="229.00" height="114.80" fill="none" stroke="#e3161b" stroke-width="3.3"/></svg>
<div class="t" style="left:6.5px;top:832.30px;font-size:12px;letter-spacing:0.241px;">Rows per page: 100</div>
<svg style="left:128px;top:835px" width="10" height="6" viewBox="0 0 10 6"><path d="M0.5 0.5L4.6 4.8 8.8 0.5" fill="none" stroke="#1d2a3e" stroke-width="0.95"/></svg>
<svg style="left:1106px;top:831px" width="8" height="14" viewBox="0 0 8 14"><path d="M6.5 1L0.8 7l5.7 6" fill="none" stroke="#5a6880" stroke-width="0.9"/></svg>
<div class="t" style="left:1130.5px;top:833.00px;font-size:12px;font-weight:bold;color:#0b64dd;letter-spacing:0.000px;">1</div>
<div class="a" style="left:1130px;top:844px;width:7px;height:1.5px;background:#0b64dd;"></div>
<svg style="left:1153px;top:831px" width="8" height="14" viewBox="0 0 8 14"><path d="M1.2 1l5.7 6-5.7 6" fill="none" stroke="#5a6880" stroke-width="0.9"/></svg>
<div class="t" style="left:1187.4px;top:8.20px;font-size:14px;letter-spacing:0.398px;">Actions:</div>
<svg style="left:1253px;top:10px" width="10" height="11" viewBox="0 0 10 11"><path d="M1 0.5h4.8l3.2 3.2v6.8H1z" fill="none" stroke="#1750ba" stroke-width="0.95"/><path d="M5.8 0.5V3.7H9" fill="none" stroke="#1750ba" stroke-width="0.9"/></svg>
<div class="t" style="left:1273.3px;top:8.20px;font-size:14px;color:#1750ba;letter-spacing:0.551px;">View single document</div>
<svg style="left:1432px;top:10px" width="12" height="12" viewBox="0 0 12 12"><path d="M1 0.5h4.8l3.2 3.2v6.8H1z" fill="none" stroke="#1750ba" stroke-width="0.95"/><path d="M5.8 0.5V3.7H9M2.8 5.8h4.4M2.8 7.9h4.4" fill="none" stroke="#1750ba" stroke-width="0.9"/><path d="M10.4 4.5v7H3" fill="none" stroke="#1750ba" stroke-width="0.9"/></svg>
<div class="t" style="left:1452.7px;top:8.20px;font-size:14px;color:#1750ba;letter-spacing:0.588px;">View surrounding documents</div>
<div class="a" style="left:1171px;top:47px;width:696px;height:1px;background:#e3e8f2;"></div>
<div class="t" style="left:1191.4px;top:73.90px;font-size:12px;font-weight:bold;color:#1750ba;letter-spacing:0.062px;">Table</div>
<div class="t" style="left:1243.3px;top:73.90px;font-size:12px;font-weight:bold;color:#07101f;letter-spacing:-0.329px;">JSON</div>
<div class="a" style="left:1187px;top:95px;width:666px;height:1px;background:#e3e8f2;"></div>
<div class="a" style="left:1187px;top:94px;width:40px;height:2px;background:#0b64dd;"></div>
<div class="box" style="left:1187px;top:104px;width:667px;height:32px;overflow:hidden"><div class="a" style="left:610px;top:0;width:57px;height:30px;background:#ecf0f8;border-left:1px solid #cad3e2"></div></div>
<svg style="left:1194px;top:111px" width="20" height="20" viewBox="0 0 20 20"><circle cx="7.7" cy="7.9" r="6.6" fill="none" stroke="#1d2a3e" stroke-width="1.15"/><path d="M12.67 12.87L15.97 16.17" stroke="#1d2a3e" stroke-width="2.6" stroke-linecap="round"/><path d="M13.07 13.27L15.67 15.87" stroke="#fff" stroke-width="0.7" stroke-linecap="round"/></svg>
<div class="t" style="left:1219.4px;top:113.60px;font-size:14px;letter-spacing:0.298px;">message</div>
<svg style="left:1775px;top:112px" width="16" height="16" viewBox="0 0 16 16"><circle cx="8" cy="8" r="8" fill="#8e9ab1"/><path d="M5.5 5.5l5 5M10.5 5.5l-5 5" stroke="#fff" stroke-width="1.7"/></svg>
<svg style="left:1808px;top:116px" width="12" height="9" viewBox="0 0 12 9"><path d="M0.5 1.2h10M2.5 4.3h6M4.5 7.5h2" stroke="#1d2a3e" stroke-width="1.1"/></svg>
<div class="a" style="left:1830px;top:112px;width:16px;height:16px;background:#e3e8f2;border-radius:3px"></div>
<div class="t" style="left:1834.5px;top:114.30px;font-size:12px;letter-spacing:0.000px;">0</div>
<div class="a" style="left:1728px;top:144px;width:28px;height:16px;background:#5a6d8c;border-radius:8px"></div>
<div class="a" style="left:1729px;top:145px;width:14px;height:14px;background:#fff;border-radius:7px"></div>
<div class="t" style="left:1764.5px;top:144.50px;font-size:14px;letter-spacing:0.411px;">Selected only</div>
<svg style="left:1194px;top:176px" width="14" height="14" viewBox="0 0 14 14"><circle cx="7" cy="7" r="6.3" fill="none" stroke="#1d2a3e" stroke-width="1.1"/><circle cx="7" cy="4.2" r="0.9" fill="#1d2a3e"/><path d="M5.5 6.3h1.7v4.2M5.3 10.5h3.5" fill="none" stroke="#1d2a3e" stroke-width="1.1"/></svg>
<div class="t" style="left:1225.3px;top:176.00px;font-size:12px;font-weight:bold;letter-spacing:-0.154px;">Field</div>
<div class="t" style="left:1425.4px;top:176.00px;font-size:12px;font-weight:bold;letter-spacing:0.157px;">Value</div>
<div class="a" style="left:1843px;top:168px;width:1px;height:29px;background:#e3e8f2;"></div>
<div class="a" style="left:1187px;top:197px;width:656px;height:1px;background:#e3e8f2;"></div>
<div class="a" style="left:1187px;top:198px;width:656px;height:639px;background:#ecf0f9;overflow:hidden">
<div class="a" style="left:232px;top:0px;width:2px;height:639px;background:#506386;"></div>
<div class="a" style="left:655px;top:0px;width:1px;height:639px;background:#5a6b8c;"></div>
<div class="t" style="left:297.4000000000001px;top:2.10px;font-size:12px;color:#3a4559;letter-spacing:0.304px;">Account Name:</div>
<div class="t" style="left:432.4px;top:2.10px;font-size:12px;color:#3a4559;letter-spacing:0.000px;">-</div>
<div class="t" style="left:297.4000000000001px;top:20.10px;font-size:12px;color:#3a4559;letter-spacing:0.344px;">Account Domain:</div>
<div class="t" style="left:432.4px;top:20.10px;font-size:12px;color:#3a4559;letter-spacing:0.000px;">-</div>
<div class="t" style="left:297.4000000000001px;top:38.10px;font-size:12px;color:#3a4559;letter-spacing:0.157px;">Logon ID:</div>
<div class="t" style="left:405.4px;top:38.10px;font-size:12px;color:#3a4559;letter-spacing:0.970px;">0×0</div>
<div class="t" style="left:270.29999999999995px;top:74.10px;font-size:12px;color:#3a4559;letter-spacing:0.348px;">Logon Information:</div>
<div class="t" style="left:297.4000000000001px;top:92.10px;font-size:12px;color:#3a4559;letter-spacing:0.316px;">Logon Type:</div>
<div class="t" style="left:405.4px;top:92.10px;font-size:12px;color:#3a4559;letter-spacing:0.000px;">3</div>
<div class="t" style="left:297.4000000000001px;top:110.10px;font-size:12px;color:#3a4559;letter-spacing:0.362px;">Restricted Admin Mode:</div>
<div class="t" style="left:459.4px;top:110.10px;font-size:12px;color:#3a4559;letter-spacing:0.000px;">-</div>
<div class="t" style="left:297.4000000000001px;top:128.10px;font-size:12px;color:#3a4559;letter-spacing:0.429px;">Virtual Account:</div>
<div class="t" style="left:432.4px;top:128.10px;font-size:12px;color:#3a4559;letter-spacing:0.767px;">No</div>
<div class="t" style="left:297.4000000000001px;top:146.10px;font-size:12px;color:#3a4559;letter-spacing:0.273px;">Elevated Token:</div>
<div class="t" style="left:432.4px;top:146.10px;font-size:12px;color:#3a4559;letter-spacing:0.489px;">Yes</div>
<div class="t" style="left:270.29999999999995px;top:182.10px;font-size:12px;color:#3a4559;letter-spacing:0.279px;">Impersonation Level:</div>
<div class="t" style="left:432.4px;top:182.10px;font-size:12px;color:#3a4559;letter-spacing:0.329px;">Impersonation</div>
<div class="t" style="left:270.29999999999995px;top:218.10px;font-size:12px;color:#3a4559;letter-spacing:0.361px;">New Logon:</div>
<div class="t" style="left:297.4000000000001px;top:236.10px;font-size:12px;color:#3a4559;letter-spacing:0.226px;">Security ID:</div>
<div class="t" style="left:405.4px;top:236.10px;font-size:12px;color:#3a4559;letter-spacing:1.122px;">S-1-5-21-2964503129-1974389968-41</div>
<div class="t" style="left:270.29999999999995px;top:254.10px;font-size:12px;color:#3a4559;letter-spacing:1.299px;">60148120-1118</div>
<div class="t" style="left:297.4000000000001px;top:272.10px;font-size:12px;color:#3a4559;letter-spacing:0.304px;">Account Name:</div>
<div class="t" style="left:432.4px;top:272.10px;font-size:12px;color:#3a4559;letter-spacing:-0.008px;">ali</div>
<div class="t" style="left:297.4000000000001px;top:290.10px;font-size:12px;color:#3a4559;letter-spacing:0.344px;">Account Domain:</div>
<div class="a" style="left:432px;top:287px;width:60px;height:18px;background:#d3dff3;"></div>
<div class="t" style="left:432.4px;top:290.10px;font-size:12px;color:#3a4559;letter-spacing:-0.309px;">CONTOSO</div>
<div class="t" style="left:297.4000000000001px;top:308.10px;font-size:12px;color:#3a4559;letter-spacing:0.157px;">Logon ID:</div>
<div class="t" style="left:405.4px;top:308.10px;font-size:12px;color:#3a4559;letter-spacing:0.733px;">0×3B63C71</div>
<div class="t" style="left:297.4000000000001px;top:326.10px;font-size:12px;color:#3a4559;letter-spacing:0.238px;">Linked Logon ID:</div>
<div class="t" style="left:432.4px;top:326.10px;font-size:12px;color:#3a4559;letter-spacing:0.970px;">0×0</div>
<div class="t" style="left:297.4000000000001px;top:344.10px;font-size:12px;color:#3a4559;letter-spacing:0.429px;">Network Account Name:</div>
<div class="t" style="left:459.4px;top:344.10px;font-size:12px;color:#3a4559;letter-spacing:0.000px;">-</div>
<div class="t" style="left:297.4000000000001px;top:362.10px;font-size:12px;color:#3a4559;letter-spacing:0.420px;">Network Account Domain:</div>
<div class="t" style="left:459.4px;top:362.10px;font-size:12px;color:#3a4559;letter-spacing:0.000px;">-</div>
<div class="t" style="left:297.4000000000001px;top:380.10px;font-size:12px;color:#3a4559;letter-spacing:0.115px;">Logon GUID:</div>
<div class="t" style="left:405.4px;top:380.10px;font-size:12px;color:#3a4559;letter-spacing:1.123px;">{00000000-0000-0000-0000-00000000</div>
<div class="t" style="left:270.29999999999995px;top:398.10px;font-size:12px;color:#3a4559;letter-spacing:0.949px;">0000}</div>
<div class="t" style="left:270.29999999999995px;top:434.10px;font-size:12px;color:#3a4559;letter-spacing:0.303px;">Process Information:</div>
<div class="t" style="left:297.4000000000001px;top:452.10px;font-size:12px;color:#3a4559;letter-spacing:0.138px;">Process ID:</div>
<div class="t" style="left:405.4px;top:452.10px;font-size:12px;color:#3a4559;letter-spacing:0.970px;">0×0</div>
<div class="t" style="left:297.4000000000001px;top:470.10px;font-size:12px;color:#3a4559;letter-spacing:0.189px;">Process Name:</div>
<div class="t" style="left:432.4px;top:470.10px;font-size:12px;color:#3a4559;letter-spacing:0.000px;">-</div>
<div class="t" style="left:270.29999999999995px;top:506.10px;font-size:12px;color:#3a4559;letter-spacing:0.404px;">Network Information:</div>
<div class="t" style="left:297.4000000000001px;top:524.10px;font-size:12px;color:#3a4559;letter-spacing:0.299px;">Workstation Name:</div>
<div class="t" style="left:432.4px;top:524.10px;font-size:12px;color:#3a4559;letter-spacing:0.175px;">EC2AMAZ-AKMDCHH</div>
<div class="t" style="left:297.4000000000001px;top:542.10px;font-size:12px;color:#3a4559;letter-spacing:0.391px;">Source Network Address:</div>
<div class="t" style="left:459.4px;top:542.10px;font-size:12px;color:#3a4559;letter-spacing:0.698px;">10.10.2.61</div>
<div class="t" style="left:297.4000000000001px;top:560.10px;font-size:12px;color:#3a4559;letter-spacing:0.236px;">Source Port:</div>
<div class="t" style="left:405.4px;top:560.10px;font-size:12px;color:#3a4559;letter-spacing:0.000px;">0</div>
<div class="t" style="left:270.29999999999995px;top:596.10px;font-size:12px;color:#3a4559;letter-spacing:0.404px;">Detailed Authentication Information:</div>
<div class="t" style="left:297.4000000000001px;top:614.10px;font-size:12px;color:#3a4559;letter-spacing:0.270px;">Logon Process:</div>
<div class="t" style="left:432.4px;top:614.10px;font-size:12px;color:#3a4559;letter-spacing:0.240px;">NtLmSsp</div>
<div class="t" style="left:297.4000000000001px;top:632.10px;font-size:12px;color:#3a4559;letter-spacing:0.294px;">Authentication Package:</div>
<div class="t" style="left:459.4px;top:632.10px;font-size:12px;color:#3a4559;letter-spacing:0.545px;">NTLM</div>
</div>
<div class="a" style="left:1187px;top:837px;width:667px;height:1px;background:#e3e8f2;"></div>
<svg style="left:1846px;top:171px" width="6" height="4" viewBox="0 0 6 4"><path d="M0 4L3 0 6 4z" fill="#a9b3c4"/></svg>
<svg style="left:1846px;top:831px" width="6" height="4" viewBox="0 0 6 4"><path d="M0 0L3 4 6 0z" fill="#a9b3c4"/></svg>
<div class="a" style="left:1846px;top:229px;width:6px;height:304px;background:#abb4c4;border-radius:3px"></div>
<svg style="left:0px;top:0px" width="1867" height="854" viewBox="0 0 1867 854"><rect x="1477.05" y="717.15" width="278.50" height="53.90" fill="none" stroke="#e3161b" stroke-width="3.3"/></svg>
</body></html>
